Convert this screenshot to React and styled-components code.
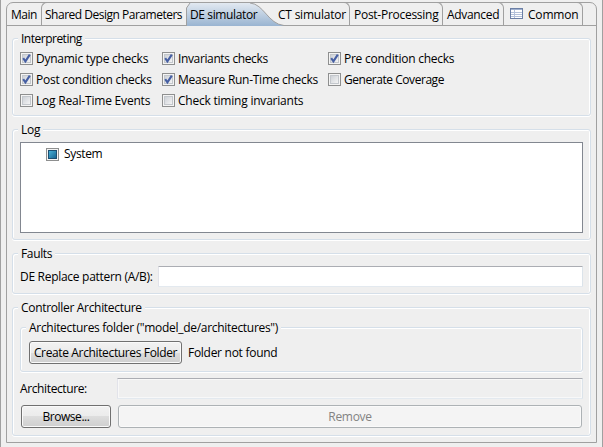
import React from "react";
import styled, { createGlobalStyle } from "styled-components";

const Global = createGlobalStyle`
  html, body { margin: 0; background: #efefef; }
  * { box-sizing: border-box; }
  body { font: 12px/16px "Open Sans", "Noto Sans", sans-serif; color: #000; overflow: hidden; }
`;

const Text = styled.span`
  display: block;
  white-space: nowrap;
  letter-spacing: ${(p) => p.$ls ?? -0.25}px;
`;

const Window = styled.div`
  width: 603px;
  height: 447px;
  background: #efefef;
  border-left: 1px solid #a0a0a0;
  border-right: 1px solid #a0a0a0;
  padding: 2px 5px 4px;
`;

const Folder = styled.div`
  height: 441px;
  border: 1px solid #a0a0a0;
  border-radius: 7px 7px 0 0;
`;

const Tabs = styled.div`
  display: flex;
  height: 23px;
  border-bottom: 1px solid #a0a0a0;
`;

const Tab = styled.div`
  display: flex;
  align-items: center;
  flex: none;
  gap: 5px;
  width: ${(p) => p.$w}px;
  height: 23px;
  margin-top: -1px;
  padding: 2px 0 0 ${(p) => p.$pad ?? 4}px;
  border: 0 solid #a0a0a0;
  border-top-width: 1px;
  ${(p) => p.$edge === "none" && "border-top-color: transparent;"}
  ${(p) => p.$edge === "right" && "border-width: 1px 1px 0 0; border-top-right-radius: 6px;"}
  ${(p) => p.$edge === "left" && "border-width: 1px 0 0 1px; border-top-left-radius: 6px;"}
`;

const ActiveTab = styled.div`
  position: relative;
  width: 85px;
  height: 23px;
  padding: 4px 0 0 3px;
  flex: none;
`;

const Curve = styled.svg`
  position: absolute;
  left: -1px;
  top: 0;
  z-index: 0;
`;

const Above = styled.div`
  position: relative;
`;

const Page = styled.div`
  display: flex;
  flex-direction: column;
  gap: 13px;
  padding: 12px 5px 0;
`;

const Group = styled.section`
  height: ${(p) => p.$h}px;
  border: 1px solid #d5dfe9;
  border-radius: 3px;
  box-shadow: inset 1px 1px #fff, inset -1px 0 #fff, 0 1px #fff;
  padding: 0 7px;
`;

const Legend = styled.h2`
  width: max-content;
  height: 16px;
  margin: -8px 0 0 -2px;
  padding: 0 3px;
  background: #efefef;
  font: inherit;
`;

const Checks = styled.div`
  display: grid;
  grid-template-columns: 142px 166px 200px;
  grid-auto-rows: 21px;
  align-items: center;
  margin-top: 1px;
`;

const Check = styled.label`
  display: flex;
  align-items: center;
  gap: 3px;
`;

const Tree = styled.div`
  height: 91px;
  margin-top: 4px;
  border: 1px solid #828790;
  background: #fff;
  padding: 3px 0 0 25px;
`;

const Row = styled.div`
  display: flex;
  align-items: center;
  gap: ${(p) => p.$gap ?? 0}px;
  margin-top: ${(p) => p.$top ?? 0}px;
  padding-left: ${(p) => p.$indent ?? 0}px;
`;

const Caption = styled.div`
  width: ${(p) => p.$w}px;
  flex: none;
`;

const Field = styled.input`
  flex: 1;
  min-width: 0;
  height: 21px;
  border: 1px solid;
  border-color: #abadb3 #dbe3ea #e3e9ef #e2e3ea;
  border-radius: 1px;
  background: #fff;
  &:disabled { background: #efefef; box-shadow: inset 0 0 0 1px #f8f8f8; }
`;

const Button = styled.button`
  display: flex;
  align-items: center;
  justify-content: center;
  width: ${(p) => p.$w}px;
  height: 23px;
  flex: none;
  padding: 0;
  font: inherit;
  color: #000;
  border: 1px solid #707070;
  border-radius: 3px;
  background: linear-gradient(#f2f2f2 0, #ebebeb 50%, #dddddd 50%, #cfcfcf 100%);
  box-shadow: inset 0 0 0 1px #fafafa;
  &:disabled { color: #838383; border-color: #adb2b5; background: #f4f4f4; }
`;

function CheckIcon({ state }) {
  return (
    <svg width="13" height="13" viewBox="0 0 13 13">
      <defs>
        <linearGradient id="boxFill" x1="0" y1="0" x2="1" y2="1">
          <stop offset="0" stopColor="#cbcfd5" />
          <stop offset="1" stopColor="#f6f6f6" />
        </linearGradient>
        <linearGradient id="partFill" x1="0" y1="0" x2="1" y2="1">
          <stop offset="0" stopColor="#4bb5dc" />
          <stop offset="1" stopColor="#14618f" />
        </linearGradient>
      </defs>
      <rect x=".5" y=".5" width="12" height="12" fill="#f4f4f4" stroke="#8e8f8f" />
      <rect x="2.5" y="2.5" width="8" height="8" fill="url(#boxFill)" stroke="#c3c7cc" />
      {state === "on" && <path d="M3.2 6.2 5.4 9.3 9.8 2.6" fill="none" stroke="#465fa3" strokeWidth="2.1" />}
      {state === "part" && <rect x="2.5" y="2.5" width="8" height="8" fill="url(#partFill)" stroke="#1c4f72" />}
    </svg>
  );
}

const Sheet = styled.svg`
  margin-bottom: 3px;
`;

function TableIcon() {
  return (
    <Sheet width="13" height="11" viewBox="0 0 13 11" shapeRendering="crispEdges">
      <rect x=".5" y=".5" width="12" height="10" fill="#fff" stroke="#6b7fa5" />
      <path d="M1 1.5h11" stroke="#9fb0cf" />
      <path d="M1 4.5h11M1 6.5h11M1 8.5h11" stroke="#b4c1da" />
      <path d="M4.5 2v8" stroke="#b4c1da" />
    </Sheet>
  );
}

const checks = [
  ["Dynamic type checks", "on", -0.25],
  ["Invariants checks", "on", -0.37],
  ["Pre condition checks", "on", -0.25],
  ["Post condition checks", "on", -0.25],
  ["Measure Run-Time checks", "on", -0.27],
  ["Generate Coverage", "off", -0.45],
  ["Log Real-Time Events", "off", -0.2],
  ["Check timing invariants", "off", -0.22],
];

export default function App() {
  return (
    <Window>
      <Global />
      <Folder>
        <Tabs>
          <Tab $w={34} $edge="none"><Text $ls={-0.5}>Main</Text></Tab>
          <Tab $w={146} $pad={3} $edge="left"><Text $ls={-0.49}>Shared Design Parameters</Text></Tab>
          <ActiveTab>
            <Curve width="104" height="23" viewBox="0 0 104 23">
              <defs>
                <linearGradient id="tabFill" x1="0" y1="0" x2="0" y2="1">
                  <stop offset="0" stopColor="#e2e9f1" />
                  <stop offset="1" stopColor="#99b4d1" />
                </linearGradient>
              </defs>
              <path d="M.5 23V5L4 0H64C78 1 82 21 98 22.5V23Z" fill="url(#tabFill)" />
              <path d="M.5 23V5L4 0M64 0C78 1 82 21 98 22.5" fill="none" stroke="#a0a0a0" />
            </Curve>
            <Above><Text $ls={-0.38}>DE simulator</Text></Above>
          </ActiveTab>
          <Tab $w={78} $pad={6} $edge="right"><Above><Text $ls={-0.22}>CT simulator</Text></Above></Tab>
          <Tab $w={93} $edge="right"><Text $ls={-0.27}>Post-Processing</Text></Tab>
          <Tab $w={61} $edge="right"><Text $ls={-0.32}>Advanced</Text></Tab>
          <Tab $w={79} $pad={6} $edge="right"><TableIcon /><Text $ls={-0.2}>Common</Text></Tab>
        </Tabs>
        <Page>
          <Group $h={78}>
            <Legend><Text $ls={-0.5}>Interpreting</Text></Legend>
            <Checks>
              {checks.map(([label, state, ls]) => (
                <Check key={label}><CheckIcon state={state} /><Text $ls={ls}>{label}</Text></Check>
              ))}
            </Checks>
          </Group>
          <Group $h={111}>
            <Legend><Text>Log</Text></Legend>
            <Tree><Row $gap={5}><CheckIcon state="part" /><Text $ls={-0.35}>System</Text></Row></Tree>
          </Group>
          <Group $h={41}>
            <Legend><Text $ls={-0.35}>Faults</Text></Legend>
            <Row $top={4}>
              <Caption $w={138}><Text $ls={-0.29}>DE Replace pattern (A/B):</Text></Caption>
              <Field />
            </Row>
          </Group>
          <Group $h={129}>
            <Legend><Text $ls={-0.32}>Controller Architecture</Text></Legend>
            <Row $top={11} />
            <Group $h={45}>
              <Legend><Text $ls={-0.3}>Architectures folder ("model_de/architectures")</Text></Legend>
              <Row $gap={6} $top={5} $indent={1}>
                <Button $w={153}><Text $ls={-0.36}>Create Architectures Folder</Text></Button>
                <Text $ls={-0.28}>Folder not found</Text>
              </Row>
            </Group>
            <Row $top={6}>
              <Caption $w={97}><Text $ls={-0.38}>Architecture:</Text></Caption>
              <Field disabled />
            </Row>
            <Row $gap={7} $top={6} $indent={1}>
              <Button $w={90}><Text $ls={-0.45}>Browse...</Text></Button>
              <Button $w={464} disabled><Text $ls={-0.3}>Remove</Text></Button>
            </Row>
          </Group>
        </Page>
      </Folder>
    </Window>
  );
}
